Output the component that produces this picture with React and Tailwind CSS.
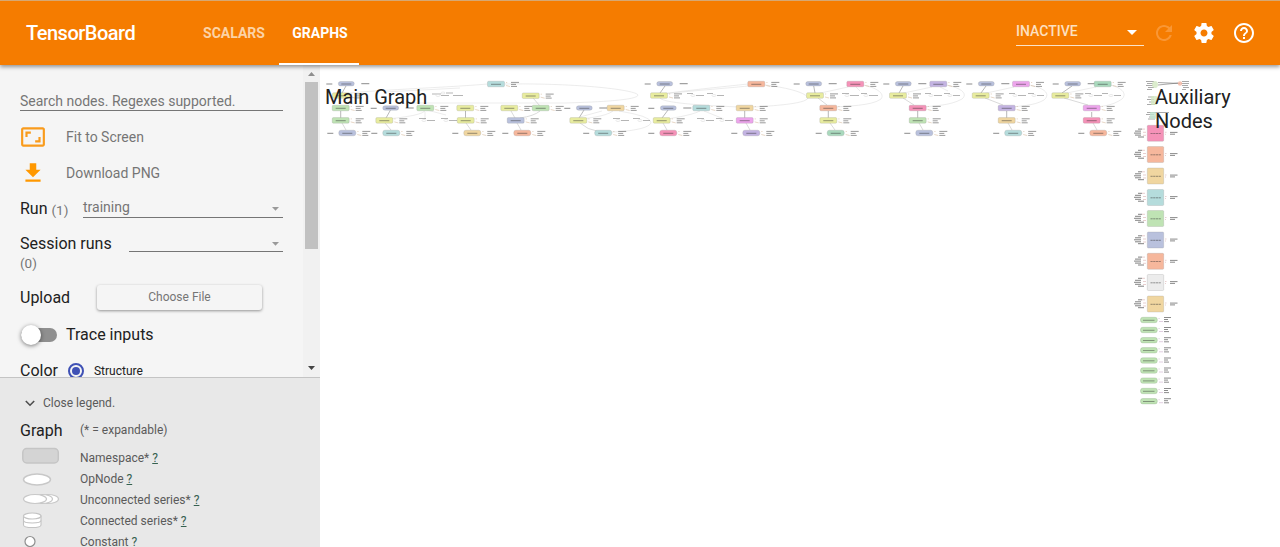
import React from 'react';

const C = {
  b: '#b9c1dd', t: '#b5dcdc', y: '#e8ec9f', g: '#bfe3b4', o: '#f0d6a0',
  s: '#f6b79c', p: '#f592b8', m: '#eda4ec', v: '#c3b3e2', n: '#a9d9bd', w: '#ececec',
};

// x, y, colour, kind: 0 = flat op, 1 = namespace, 2 = stack root
const NODES = [
  [346.3, 83.7, 'b', 0], [496, 84, 't', 1], [341, 95.5, 'y', 1],
  [340.7, 108, 'g', 1], [390.7, 108, 'b', 0], [425.3, 108, 'g', 1], [465.3, 108, 'y', 1], [509.3, 108, 'y', 1],
  [340.7, 120.4, 'g', 1], [384.3, 120.4, 'y', 1], [465.7, 120.4, 'y', 1], [515.7, 120.4, 'b', 1],
  [347.3, 133, 'b', 2], [391.3, 133, 't', 2], [472.3, 133, 'o', 2], [522.3, 133, 's', 2],
  [530.7, 95.7, 'y', 1], [540.7, 108, 'g', 1], [584.3, 108, 'b', 0], [615.7, 108, 'o', 1],
  [578.3, 120.4, 'y', 1], [603.2, 133, 't', 2],
  [664.7, 83.7, 'b', 0], [659, 95.5, 'y', 1], [668.3, 108, 'b', 0], [701.3, 108, 't', 1],
  [661.7, 120.4, 'y', 1], [668.3, 133, 'p', 2],
  [756.3, 84, 's', 1], [744.7, 108, 'o', 1], [744.7, 120.4, 'm', 1], [751.3, 133, 'v', 2],
  [813.7, 83.7, 'b', 0], [855.3, 84, 'p', 1], [815, 95.5, 'y', 1], [828.3, 108, 's', 1], [828.3, 120.4, 'y', 1], [835.7, 133, 'n', 2],
  [903.3, 83.7, 'b', 0], [938.3, 84, 'v', 1], [898, 95.5, 'y', 1], [917.7, 108, 'p', 1], [917.7, 120.4, 'g', 1], [924.3, 133, 'b', 2],
  [986.3, 83.7, 'b', 0], [1021, 84, 'm', 1], [980.7, 95.5, 'y', 1], [1006.7, 108, 'v', 1], [1006.7, 120.4, 'o', 1], [1013.2, 133, 't', 2],
  [1072.7, 83.7, 'b', 0], [1102.7, 84, 'n', 1], [1060.3, 95.5, 'y', 1], [1091.7, 108, 'm', 1], [1091.7, 120.4, 'p', 1], [1098.3, 133, 's', 2],
];

const EDGES = [
  'M346 86L342 93', 'M340.700 111V118', 'M390.500 110L386 118', 'M465.500 111V118',
  'M584 110L579 118', 'M665 86L660 93', 'M668 110L662 118',
  'M744.700 111V118', 'M813.700 86L815 93', 'M828.300 111V118',
  'M903 86L899 93', 'M917.700 111V118', 'M986 86L981 93', 'M1006.700 111V118', 'M1072 86L1062 93', 'M1091.700 112V117',
];

const THIN_EDGES = [
  'M342 123L346 130', 'M385 123L391 130', 'M466 123L471 130', 'M511 111L515 118', 'M517 123L521 130', 'M533 98L540 106',
  'M540 111Q534 116 520 118', 'M580 123Q588 130 597 131', 'M663 123L667 130', 'M746 123L750 130', 'M818 98L827 105', 'M830 123L835 130',
  'M903 98L914 105', 'M919 123L923 130', 'M985 98L1003 105', 'M1008 123L1012 130', 'M1064 98L1088 105', 'M1093 123L1097 130',
];

const FAINT = [
  'M342 94C370 90 440 88 488 84', 'M384 92L460 88', 'M505 84C580 83 636 90 638 95C638 100 600 102 565 103H410',
  'M425 111C420 116 395 118 388 119', 'M427 110L446 115', 'M661 94C690 90 720 87 748 84', 'M662 94C700 90 730 88 748 86', 'M765 85C790 88 806 93 808 98C806 104 770 106 754 107',
  'M660 98C664 104 720 106 738 107', 'M613 111C605 117 586 118 582 119', 'M619 111Q650 116 651 122C651 130 618 132 610 132', 'M580 117L602 111',
  'M700 111C690 116 670 118 664 120', 'M704 111L724 119', 'M816 94L848 87', 'M863 85C878 88 885 94 881 99C872 106 845 106 836 107',
  'M899 94L932 87', 'M946 85C962 88 968 94 962 99C950 106 930 106 924 107', 'M982 94L1014 87', 'M1029 85C1045 88 1051 94 1044 100C1034 106 1018 106 1012 107',
  'M1062 94L1096 87', 'M1110 85C1123 88 1127 94 1122 99C1112 106 1102 106 1097 107', 'M425 112V119', 'M856 87L860 91', 'M940 87L948 91',
];

// stand-alone op groups between stacks
const DASHES = [
  [432, 94, 9], [441, 95.500, 8], [453, 95.500, 10], [446, 93, 7], [419, 118.500, 7], [427, 120.500, 8], [441, 118.500, 7], [449, 120.500, 8],
  [613, 118.500, 7], [621, 120.500, 8], [633, 118.500, 7], [643, 120.500, 7], [687, 93.500, 6], [696, 95.500, 8], [707, 93.500, 6], [717, 95.500, 7],
  [697, 118.500, 7], [706, 120.500, 8], [716, 118.500, 6], [725, 120.500, 8],
  [842, 93.500, 7], [850, 95.500, 9], [861, 93.500, 6], [869, 95.500, 9], [925, 93.500, 6], [934, 95.500, 8], [944, 93.500, 6], [953, 95.500, 7],
  [1009, 93.500, 6], [1018, 95.500, 8], [1028, 93.500, 6], [1037, 95.500, 7], [1085, 93.500, 6], [1094, 95.500, 8], [1102, 93.500, 6], [1114, 95.500, 7],
];

function GraphNode({ x, y, c, kind }) {
  const h = kind === 0 ? 4.4 : 5.6;
  const w = kind === 0 ? 16 : 17;
  const rx = kind === 1 ? 1.2 : 2.2;
  return (
    <g>
      <rect x={x - w / 2} y={y - h / 2} width={w} height={h} rx={rx} fill={C[c]} stroke="#8b8b8b" strokeOpacity=".45" strokeWidth=".5" />
      <path d={`M${x - 5} ${y + 0.300}h10`} stroke="#333" strokeWidth=".8" opacity=".6" />
      {kind !== 1 && <path d={`M${x - 20} ${y + 0.300}h6`} stroke="#222" strokeWidth=".7" opacity=".75" />}
      {kind === 0 ? (
        <path d={`M${x + 15} ${y}h8`} stroke="#222" strokeWidth=".7" opacity=".75" />
      ) : (
        <>
          <path d={`M${x + 15} ${y - 1.600}h8M${x + 15} ${y + 0.400}h5M${x + 15} ${y + 2.400}h6`} stroke="#222" strokeWidth=".7" opacity=".65" fill="none" />
          <path d={`M${x + 10} ${y - 1.500}h1.200M${x + 10} ${y + 1.500}l4 1`} stroke="#bd8f63" strokeWidth=".6" opacity=".6" fill="none" />
        </>
      )}
    </g>
  );
}

const BLOCKS = [
  [133.300, 'p'], [154.500, 's'], [176, 'o'], [197.500, 't'], [218.500, 'g'], [240, 'b'], [261.300, 's'], [282.500, 'w'], [304, 'o'],
];
const PILLS = [320, 330, 340.200, 350.300, 360.500, 370.500, 380.600, 391, 401.200];

function Graph() {
  return (
    <svg className="block" width="960" height="482" viewBox="320 65 960 482">
      <g fill="none" stroke="#cfcfcf" strokeWidth=".4">
        {FAINT.map((d) => <path key={d} d={d} />)}
      </g>
      <g fill="none" stroke="#999" strokeWidth=".7">
        {EDGES.map((d) => <path key={d} d={d} />)}
      </g>
      <g fill="none" stroke="#b5b5b5" strokeWidth=".5">
        {THIN_EDGES.map((d) => <path key={d} d={d} />)}
      </g>
      {DASHES.map(([x, y, w], i) => (
        <g key={i}>
          <path d={`M${x} ${y}h${w}`} stroke="#333" strokeWidth=".6" opacity=".6" />
          {i % 2 === 1 && <ellipse cx={x - 3} cy={y} rx="2" ry="1" fill="#fff" stroke="#ccc" strokeWidth=".4" />}
        </g>
      ))}
      {NODES.map(([x, y, c, k]) => <GraphNode key={`${x}-${y}`} x={x} y={y} c={c} kind={k} />)}

      <g fill="none" stroke="#333" strokeWidth=".6" opacity=".7">
        <path d="M1146 81.500h8M1147 83.500h6M1146 85.500h7M1148 87.500h6M1147 89.500h5M1182 81.500h7M1181 83.500h8M1182 85.500h6M1183 87.500h6M1182 89.500h4M1158 82.500L1180 83.500M1158 85L1178 83" />
        <path d="M1148 97h6M1147 99.500h7M1149 102h5M1147 104.500h8M1147 112.500h22M1146 114.500h8M1149 117h6M1148 119h7" />
      </g>
      <ellipse cx="1155" cy="84.500" rx="3" ry="3.500" fill="#d2e7c1" opacity=".8" />
      <circle cx="1180" cy="83.500" r="2.200" fill="#f4b5a0" opacity=".8" />
      <rect x="1151" y="96" width="6" height="9" rx="1" fill="#d2e7c1" opacity=".8" />
      <rect x="1150" y="112" width="6" height="7" rx="1" fill="#bfe3cf" opacity=".8" />

      {BLOCKS.map(([y, c]) => (
        <g key={y}>
          <rect x="1147.300" y={y - 8} width="16.400" height="16" rx="1" fill={C[c]} stroke="#999" strokeOpacity=".5" strokeWidth=".5" />
          <path d={`M1150.500 ${y + 0.300}h10.500`} stroke="#333" strokeWidth=".7" strokeDasharray="2.200 .5" opacity=".7" />
          <path d={`M1138 ${y - 4.200}h4M1135 ${y - 2.200}h6M1134 ${y - 0.200}h7M1135 ${y + 1.800}h6M1138 ${y + 3.700}h6`} stroke="#222" strokeWidth=".75" opacity=".75" />
          <path d={`M1142 ${y - 4.200}h3M1143 ${y - 1}h3M1143 ${y + 2}h3M1165 ${y - 1}h1.500M1165 ${y + 1}h1`} stroke="#c98f8f" strokeWidth=".6" opacity=".7" />
          <path d={`M1170 ${y - 0.900}h7.500M1170 ${y + 0.900}h5`} stroke="#222" strokeWidth=".7" opacity=".75" />
        </g>
      ))}
      {PILLS.map((y) => (
        <g key={y}>
          <rect x="1140.500" y={y - 2.700} width="16.800" height="5.400" rx="2.200" fill="#bfe3b4" stroke="#8aa383" strokeOpacity=".6" strokeWidth=".5" />
          <path d={`M1143 ${y + 0.300}h11.500`} stroke="#333" strokeWidth=".7" opacity=".65" />
          <path d={`M1158.500 ${y - 1.500}h1.200M1159 ${y + 1.500}h4`} stroke="#b98fb9" strokeWidth=".6" opacity=".7" />
          <path d={`M1164 ${y - 2.500}h7M1164 ${y - 0.500}h4M1164 ${y + 1.600}h5`} stroke="#222" strokeWidth=".7" opacity=".75" />
        </g>
      ))}
    </svg>
  );
}

function Header() {
  return (
    <header className="relative z-10 flex h-[65px] w-full shrink-0 items-center border-t border-[#d6a873] bg-[#f57c00] text-white shadow-[0_2px_4px_rgba(0,0,0,0.4)]">
      <h1 className="w-[187px] shrink-0 pl-[26px] text-[20px] font-medium tracking-[-0.5px]">TensorBoard</h1>
      <nav className="flex h-full items-stretch text-[14px] font-bold">
        <a className="flex w-[92px] items-center justify-center pl-[2px] text-[#fcd3a6]">SCALARS</a>
        <a className="flex w-20 items-center justify-center border-b-2 border-white pt-0.5 pl-[2px]">GRAPHS</a>
      </nav>
      <div className="ml-auto flex items-center pr-6">
        <div className="mt-[-3px] flex h-[29px] w-[128px] items-center justify-between border-b border-[#fbe3c8] pr-[7px] text-[14px] font-medium text-[#fde0c0]">
          INACTIVE
          <svg className="mt-[2px]" width="10" height="5" viewBox="0 0 10 5" fill="#fff"><path d="M0 0h10L5 5z" /></svg>
        </div>
        <svg className="ml-2" width="24" height="24" viewBox="0 0 24 24" fill="#f99735"><path d="M17.650 6.350C16.200 4.900 14.210 4 12 4c-4.420 0-7.990 3.580-7.990 8s3.570 8 7.990 8c3.730 0 6.840-2.550 7.730-6h-2.080c-.82 2.330-3.040 4-5.650 4-3.310 0-6-2.690-6-6s2.690-6 6-6c1.660 0 3.140.69 4.220 1.780L13 11h7V4l-2.350 2.350z" /></svg>
        <svg className="ml-4" width="24" height="24" viewBox="0 0 24 24" fill="#fff"><path d="M19.430 12.980c.04-.32.07-.64.07-.98s-.03-.66-.07-.98l2.110-1.650c.19-.15.24-.42.12-.64l-2-3.460c-.12-.22-.39-.3-.61-.22l-2.490 1c-.52-.4-1.080-.73-1.690-.98l-.38-2.650C14.460 2.180 14.250 2 14 2h-4c-.25 0-.46.18-.49.42l-.38 2.650c-.61.25-1.170.59-1.690.98l-2.490-1c-.23-.09-.49 0-.61.22l-2 3.460c-.13.22-.07.49.12.64l2.110 1.650c-.04.32-.07.65-.07.98s.03.66.07.98l-2.110 1.650c-.19.15-.24.42-.12.64l2 3.460c.12.22.39.3.61.22l2.490-1c.52.4 1.080.73 1.690.98l.38 2.650c.03.24.24.42.49.42h4c.25 0 .46-.18.49-.42l.38-2.650c.61-.25 1.170-.59 1.690-.98l2.490 1c.23.09.49 0 .61-.22l2-3.460c.12-.22.07-.49-.12-.64l-2.110-1.650zM12 15.500c-1.930 0-3.500-1.570-3.500-3.500s1.570-3.500 3.500-3.500 3.500 1.570 3.500 3.500-1.570 3.500-3.500 3.500z" /></svg>
        <svg className="ml-4" width="24" height="24" viewBox="0 0 24 24" fill="#fff"><path d="M11 18h2v-2h-2v2zm1-16C6.480 2 2 6.480 2 12s4.480 10 10 10 10-4.480 10-10S17.520 2 12 2zm0 18c-4.410 0-8-3.590-8-8s3.590-8 8-8 8 3.590 8 8-3.590 8-8 8zm0-14c-2.210 0-4 1.790-4 4h2c0-1.100.9-2 2-2s2 .9 2 2c0 2-3 1.750-3 5h2c0-2.250 3-2.500 3-5 0-2.210-1.790-4-4-4z" /></svg>
      </div>
    </header>
  );
}

const Caret = () => (
  <svg width="7" height="4" viewBox="0 0 7 4" fill="#9a9a9a"><path d="M0 0h7L3.500 3.800z" /></svg>
);

function Controls() {
  return (
    <div className="flex h-[312px] overflow-hidden bg-[#f5f5f5]">
      <div className="w-[303px] shrink-0 pt-[26px] pr-5 pl-5 text-[16px] leading-[20px] text-[#212121]">
        <div className="h-5 border-b border-[#757575] text-[14px] text-[#757575]">Search nodes. Regexes supported.</div>
        <div className="mt-2 flex h-9 items-center text-[14px] text-[#757575]">
          <svg className="mr-5" width="26" height="26" viewBox="0 0 24 24" fill="#f99b1c"><path d="M19 12h-2v3h-3v2h5v-5zM7 9h3V7H5v5h2V9zm14-6H3c-1.100 0-2 .9-2 2v14c0 1.100.9 2 2 2h18c1.100 0 2-.9 2-2V5c0-1.100-.9-2-2-2zm0 16.010H3V4.990h18v14.020z" /></svg>
          Fit to Screen
        </div>
        <div className="flex h-9 items-center text-[14px] text-[#757575]">
          <svg className="mr-5" width="26" height="26" viewBox="0 0 24 24" fill="#ff9800"><path d="M19 9h-4V3H9v6H5l7 7 7-7zM5 18v2h14v-2H5z" /></svg>
          Download PNG
        </div>
        <div className="mt-px flex h-[34px] items-center">
          Run&nbsp;<span className="mt-0.5 text-[13.500px] text-[#757575]">(1)</span>
          <div className="ml-auto flex h-[18px] w-[200px] items-center justify-between border-b border-[#757575] pr-1 text-[14px] text-[#757575]"><span className="-mt-1">training</span><Caret /></div>
        </div>
        <div className="flex h-9 items-center justify-between">
          Session runs
          <div className="flex h-4 w-[154px] items-center justify-end border-b border-[#757575] pr-1"><Caret /></div>
        </div>
        <div className="-mt-[9px] h-5 text-[13.500px] leading-[20px] text-[#757575]">(0)</div>
        <div className="mt-2 flex h-[33px] items-center">
          <span className="w-[77px]">Upload</span>
          <div className="-mt-px flex h-[25px] w-[165px] items-center justify-center rounded-[3px] text-[12px] text-[#757575] shadow-[0_1px_3px_rgba(0,0,0,0.4)]">Choose File</div>
        </div>
        <div className="mt-[3px] flex h-9 items-center">
          <div className="-mt-px ml-px flex h-3.5 w-9 items-center rounded-full bg-[#8f8f8f]">
            <div className="size-5 shrink-0 rounded-full bg-white shadow-[0_1px_4px_rgba(0,0,0,0.5)]" />
          </div>
          <span className="ml-[9px]">Trace inputs</span>
        </div>
        <div className="flex h-9 items-center">
          Color
          <div className="ml-[10px] flex size-4 items-center justify-center rounded-full border-2 border-[#3f51b5]">
            <div className="size-2 rounded-full bg-[#3f51b5]" />
          </div>
          <span className="ml-[10px] text-[12px]">Structure</span>
        </div>
      </div>
      <div className="flex w-[17px] flex-col items-center bg-[#f1f1f1] pt-[7px] pb-[7px]">
        <svg width="7" height="4" viewBox="0 0 7 4" fill="#8e8e8e"><path d="M0 4h7L3.500 0z" /></svg>
        <div className="mt-[6px] h-[167px] w-[13px] bg-[#c1c1c1]" />
        <svg className="mt-auto" width="7" height="4" viewBox="0 0 7 4" fill="#444"><path d="M0 0h7L3.500 4z" /></svg>
      </div>
    </div>
  );
}

const LEGEND = [
  ['Namespace*', (
    <svg width="40" height="20" viewBox="0 0 40 20"><rect x="2.800" y="1.500" width="35.500" height="14.500" rx="4" fill="#d4d4d4" stroke="#c5c5c5" strokeWidth="1.500" /></svg>
  )],
  ['OpNode', (
    <svg width="40" height="20" viewBox="0 0 40 20"><ellipse cx="17" cy="11.500" rx="13.500" ry="5.400" fill="#fff" stroke="#c8c8c8" strokeWidth="1.500" /></svg>
  )],
  ['Unconnected series*', (
    <svg width="40" height="20" viewBox="0 0 40 20" fill="#fff" stroke="#c8c8c8" strokeWidth="1.200"><ellipse cx="27.500" cy="10" rx="11" ry="4.500" /><ellipse cx="21.500" cy="10" rx="11" ry="4.500" /><ellipse cx="15" cy="10" rx="11.500" ry="4.500" /></svg>
  )],
  ['Connected series*', (
    <svg width="40" height="20" viewBox="0 0 40 20" fill="#fff" stroke="#c3c3c3" strokeWidth="1.100"><path d="M3.500 5.500v9.500c0 3.400 17.500 3.400 17.500 0V5.500" /><path d="M3.500 10.500c0 3.300 17.500 3.300 17.500 0" fill="none" /><ellipse cx="12.250" cy="6" rx="8.750" ry="3" /></svg>
  )],
  ['Constant', (
    <svg width="40" height="20" viewBox="0 0 40 20"><circle cx="10" cy="10.500" r="5" fill="#fff" stroke="#8f8f8f" strokeWidth="1.200" /></svg>
  )],
];

function Legend() {
  return (
    <div className="flex-1 overflow-hidden border-t border-[#c4c4c4] bg-[#e8e8e8] pt-[15px] pl-5 text-[12px] text-[#5a5a5a]">
      <div className="flex h-5 items-center">
        <svg className="ml-[5px] mr-2" width="10" height="7" viewBox="0 0 10 7" fill="none" stroke="#4d4d4d" strokeWidth="1.600"><path d="M.8 1L5 5.200 9.200 1" /></svg>
        Close legend.
      </div>
      <div className="mt-[3px] flex h-[26px] items-center">
        <span className="w-[60px] pt-1 text-[16px] text-[#212121]">Graph</span>
        <span className="pt-0.5">(* = expandable)</span>
      </div>
      <div className="pt-1">
        {LEGEND.map(([label, icon]) => (
          <div key={label} className="flex h-[21px] items-center">
            <span className="w-[60px] shrink-0">{icon}</span>
            <span className="whitespace-nowrap pt-0.5">{label} <a className="text-[#35604f] underline">?</a></span>
          </div>
        ))}
      </div>
    </div>
  );
}

export default function App() {
  return (
    <div className="flex h-[547px] w-[1280px] flex-col overflow-hidden bg-white font-[Roboto,'Liberation_Sans',sans-serif]">
      <Header />
      <main className="flex min-h-0 flex-1">
        <aside className="flex w-80 shrink-0 flex-col">
          <Controls />
          <Legend />
        </aside>
        <section className="relative flex-1 overflow-hidden bg-white text-[20px] leading-[24px] text-[#212121]">
          <Graph />
          <div className="absolute top-5 left-[5px]">Main Graph</div>
          <div className="absolute top-5 left-[835px] w-24">Auxiliary Nodes</div>
        </section>
      </main>
    </div>
  );
}
